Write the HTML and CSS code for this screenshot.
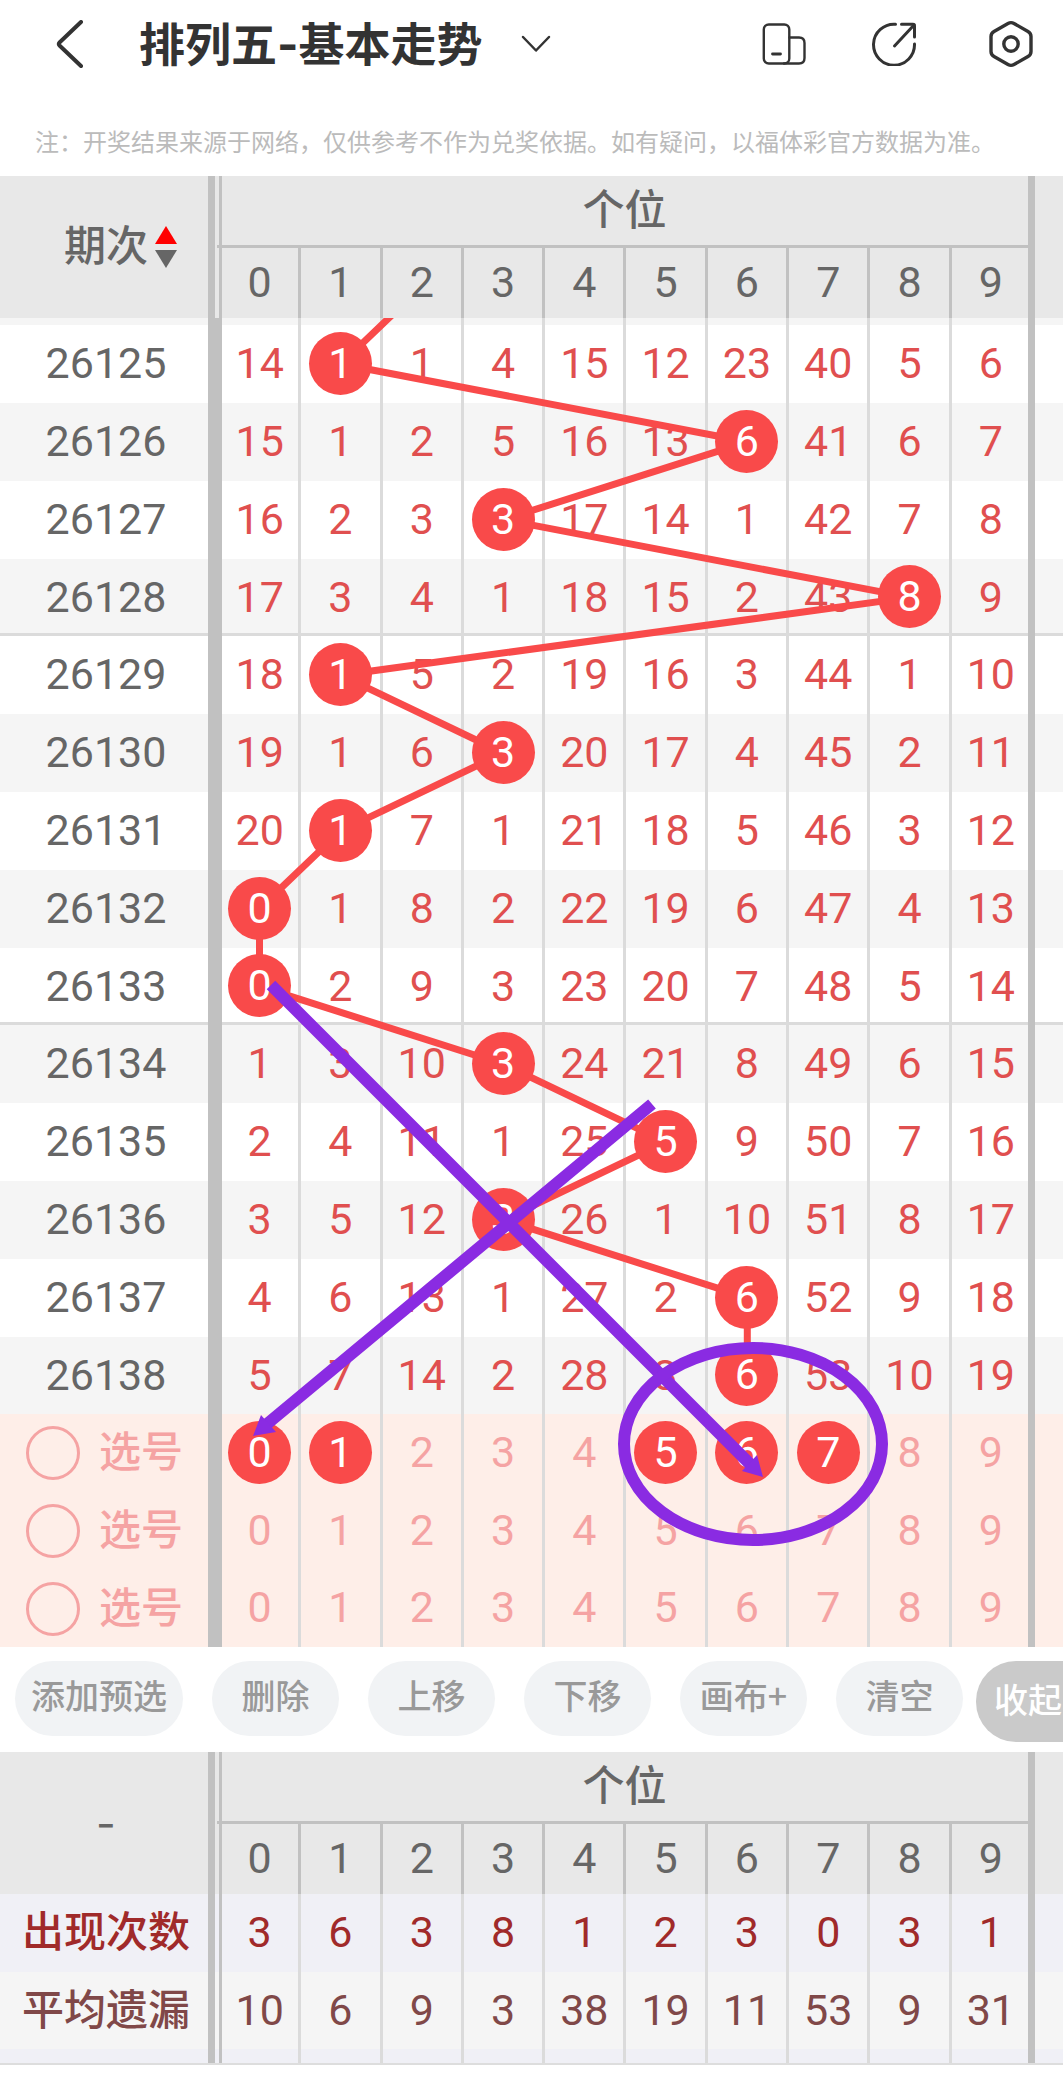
FILE: index.html
```html
<!DOCTYPE html>
<html lang="zh-CN">

<head>
    <meta charset="UTF-8">
    <meta name="viewport" content="width=device-width, initial-scale=1.0">
    <title>排列五-基本走势</title>
    <link rel="stylesheet" href="styles.css">
</head>

<body>

    <header class="header">
        <button type="button" class="icon-btn" aria-label="返回">
            <svg width="28" height="48" viewBox="0 0 28 48"><path d="M25 2 L3.500 22.500 Q2 24 3.500 25.500 L25 46" stroke-width="4"/></svg>
        </button>
        <h1>排列五-基本走势</h1>
        <button type="button" class="icon-btn" aria-label="切换走势">
            <svg width="30" height="18" viewBox="0 0 30 18"><path d="M2 2 L15 15.500 L28 2" stroke-width="2.500"/></svg>
        </button>
        <div class="header-actions">
            <button type="button" class="icon-btn" aria-label="屏幕">
                <svg width="44" height="44" viewBox="0 0 44 44" stroke-width="2.400">
                    <rect x="1.800" y="2.500" width="25.500" height="39" rx="5"/>
                    <path d="M27.500 15.500 H37 Q42.500 15.500 42.500 21 V36 Q42.500 41.500 37 41.500 H22"/>
                    <path d="M10.500 32 H18.500" stroke-width="2.800"/>
                </svg>
            </button>
            <button type="button" class="icon-btn" aria-label="分享">
                <svg width="50" height="44" viewBox="0 0 50 44" stroke-width="3">
                    <path d="M23.500 2.300 A20.500 20.500 0 1 0 42.500 22"/>
                    <path d="M22.500 24 L42 3"/>
                    <path d="M29.500 2.300 H41 Q42.500 2.300 42.500 4 V15"/>
                </svg>
            </button>
            <button type="button" class="icon-btn" aria-label="设置">
                <svg width="46" height="48" viewBox="0 0 46 48" stroke-width="3.400">
                    <path d="M20 3.500 Q23 1.700 26 3.500 L40 11.500 Q43 13.300 43 16.500 V31.500 Q43 34.700 40 36.500 L26 44.500 Q23 46.300 20 44.500 L6 36.500 Q3 34.700 3 31.500 V16.500 Q3 13.300 6 11.500 Z"/>
                    <circle cx="23" cy="24" r="7.200"/>
                </svg>
            </button>
        </div>
    </header>

    <p class="note">注：开奖结果来源于网络，仅供参考不作为兑奖依据。如有疑问，以福体彩官方数据为准。</p>

    <main>
        <div class="chart">
            <table class="trend">
                <colgroup>
                    <col class="col-label">
                    <col span="10">
                    <col class="col-end">
                </colgroup>
                <thead>
                    <tr class="head-top">
                        <th class="label" rowspan="2">
                            <button type="button" class="sort">期次
                                <svg width="22" height="42" viewBox="0 0 22 42"><path class="up" d="M11 0 L22 18 H0 Z"/><path class="down" d="M0 24 H22 L11 42 Z"/></svg>
                            </button>
                        </th>
                        <th class="first last" colspan="10">个位</th>
                        <th class="end" rowspan="2"></th>
                    </tr>
                    <tr class="head-nums"></tr>
                </thead>
                <tbody id="history"></tbody>
                <tbody id="picks" class="picks"></tbody>
            </table>
            <svg class="overlay lines" viewBox="0 176 1063 1471" preserveAspectRatio="none">
                <clipPath id="bodyClip"><rect x="222" y="318" width="806" height="1096"/></clipPath>
                <polyline id="trendLine" clip-path="url(#bodyClip)"/>
            </svg>
            <svg class="overlay marks" viewBox="0 176 1063 1471" preserveAspectRatio="none">
                <path d="M271 985 L750 1464 M652 1104 L267 1424"/>
                <path class="tip" d="M763 1477 L742 1471 L757 1455 Z M253 1436 L261 1415 L276 1432 Z"/>
                <ellipse cx="753" cy="1444" rx="129" ry="96"/>
            </svg>
        </div>

        <div class="toolbar">
            <button type="button">添加预选</button>
            <button type="button">删除</button>
            <button type="button">上移</button>
            <button type="button">下移</button>
            <button type="button">画布+</button>
            <button type="button">清空</button>
            <button type="button" class="collapse">收起</button>
        </div>

        <table class="trend stats">
            <colgroup>
                <col class="col-label">
                <col span="10">
                <col class="col-end">
            </colgroup>
            <thead>
                <tr class="head-top">
                    <th class="label dash" rowspan="2">-</th>
                    <th class="first last" colspan="10">个位</th>
                    <th class="end" rowspan="2"></th>
                </tr>
                <tr class="head-nums"></tr>
            </thead>
            <tbody id="stats"></tbody>
        </table>
    </main>

    <script src="script.js"></script>
</body>

</html>
```

FILE: styles.css
```css
* {
    margin: 0;
    padding: 0;
    box-sizing: border-box;
}

body {
    background-color: #fff;
    color: #666;
    font-family: Roboto, "Noto Sans CJK SC", sans-serif;
}

button {
    border: none;
    background: none;
    font: inherit;
    color: inherit;
    cursor: pointer;
}

.header {
    display: flex;
    align-items: center;
    height: 88px;
    padding: 0 29px 0 56px;
}

.header h1 {
    margin: 0 38px 0 55px;
    font-family: Inter, "Noto Sans CJK SC", sans-serif;
    font-size: 46px;
    line-height: 60px;
    font-weight: bold;
    color: #333;
    white-space: nowrap;
}

.header-actions {
    display: flex;
    align-items: center;
    gap: 66px;
    margin-left: auto;
}

.icon-btn {
    display: flex;
}

.icon-btn svg {
    fill: none;
    stroke: #333;
    stroke-linecap: round;
    stroke-linejoin: round;
}

.note {
    padding: 35px 35px 17px;
    font-family: "Noto Sans CJK SC", sans-serif;
    font-size: 24px;
    line-height: 36px;
    color: #bbb;
    white-space: nowrap;
}

/* trend table */
.chart {
    position: relative;
}

.trend {
    width: 100%;
    table-layout: fixed;
    border-collapse: separate;
    border-spacing: 0;
    font-size: 43px;
    line-height: 50px;
    text-align: center;
}

.col-label {
    width: 217px;
}

.col-end {
    width: 33px;
}

.trend th {
    font-weight: normal;
}

.trend thead {
    background-color: #e8e8e8;
}

.head-top {
    height: 72px;
    font-size: 42px;
}

.trend .head-top .first {
    border-bottom: 3px solid #c1c1c1;
    font-weight: 500;
}

.head-nums {
    height: 70px;
}

.trend .label {
    padding-right: 5px;
    font-size: 43px;
    background: linear-gradient(#c1c1c1, #c1c1c1) right 2px top / 7px 100% no-repeat;
}

.trend .dash {
    font-family: Inter, sans-serif;
}

.trend .num {
    padding-bottom: 2px;
    border-left: 3px solid #dbdbdb;
}

.trend thead .num {
    border-left-color: #c1c1c1;
}

.trend .first,
.trend thead .first {
    border-left: none;
    padding-left: 4px;
    background: linear-gradient(to right, transparent 2px, #c1c1c1 2px, #c1c1c1 5px, transparent 5px);
}

.trend .last {
    border-right: 2px solid #c1c1c1;
}

.trend .num.last {
    padding-left: 2px;
}

.trend .end {
    border-left: 5px solid #c1c1c1;
}

#history .label,
#picks .label {
    background-position: right top;
    background-size: 9px 100%;
}

#history .first,
#picks .first {
    background: linear-gradient(#c1c1c1, #c1c1c1) left top / 5px 100% no-repeat;
}

.sort {
    display: flex;
    align-items: center;
    gap: 7px;
    padding-left: 64px;
    font-size: 42px;
    font-weight: 500;
}

.sort .up {
    fill: #f00;
}

.sort .down {
    fill: #666;
}

.row {
    height: 78px;
}

.row.group-end {
    height: 77px;
}

.sliver {
    height: 7px;
    background-color: #f5f5f5;
}

#history {
    color: #e04f4f;
}

#history .label {
    padding-bottom: 2px;
    color: #666;
}

#history .row:nth-child(odd) {
    background-color: #f5f5f5;
}

#history .group-end:not(:last-child) {
    background-image: linear-gradient(#dbdbdb, #dbdbdb);
    background-position: left bottom;
    background-size: 100% 3px;
    background-repeat: no-repeat;
}

.ball,
.pick {
    display: block;
    width: 63px;
    height: 63px;
    margin: 0 auto;
    line-height: 63px;
}

.ball,
.pick[aria-pressed="true"] {
    position: relative;
    z-index: 2;
    border-radius: 50%;
    background-color: #f94a4a;
    color: #fff;
}

.picks {
    background-color: #feeee8;
    color: #f5a3a3;
}

.picks label {
    display: flex;
    align-items: center;
    gap: 19px;
    padding-left: 26px;
    font-size: 42px;
    font-weight: 500;
}

.picks input {
    appearance: none;
    width: 54px;
    height: 54px;
    border: 3px solid #f5a3a3;
    border-radius: 50%;
}

.picks input:checked {
    background-color: #f94a4a;
}

/* lines drawn over the table */
.overlay {
    position: absolute;
    top: 0;
    left: 0;
    width: 100%;
    height: 100%;
    fill: none;
    pointer-events: none;
}

.lines {
    z-index: 1;
    stroke: #f94a4a;
    stroke-width: 7;
}

.marks {
    z-index: 3;
    stroke: #8a2be2;
    stroke-width: 12;
}

.marks .tip {
    fill: #8a2be2;
    stroke: none;
}

.toolbar {
    position: relative;
    display: flex;
    align-items: flex-start;
    gap: 29px;
    height: 105px;
    padding: 14px 15px;
    overflow: hidden;
}

.toolbar button {
    flex: none;
    min-width: 127px;
    height: 75px;
    padding: 0 16px 8px;
    border-radius: 38px;
    background-color: #f1f3f5;
    color: #999;
    font-family: "Noto Sans CJK SC", sans-serif;
    font-size: 34px;
    font-weight: 500;
    line-height: 50px;
}

.toolbar .collapse {
    position: absolute;
    top: 14px;
    right: 0;
    min-width: 0;
    height: 81px;
    padding: 0 1px 5px 18px;
    border-radius: 40px 0 0 40px;
    background-color: #cacaca;
    color: #fff;
}

/* statistics */
.stats {
    border-bottom: 2px solid #ddd;
}

.stats .count {
    background-color: #f0f0f6;
    color: #a02a2a;
}

.stats .average {
    background-color: #f5f5f5;
    color: #804848;
}

.stats tbody .label {
    font-size: 42px;
    font-weight: 500;
}

.stats .cut {
    height: 14px;
    background-color: #f0f0f6;
}
```

FILE: script.js
```javascript
// [issue, winning digit, cells 0-9]
const history = [
    ["26125", 1, [14, 1, 1, 4, 15, 12, 23, 40, 5, 6]],
    ["26126", 6, [15, 1, 2, 5, 16, 13, 6, 41, 6, 7]],
    ["26127", 3, [16, 2, 3, 3, 17, 14, 1, 42, 7, 8]],
    ["26128", 8, [17, 3, 4, 1, 18, 15, 2, 43, 8, 9]],
    ["26129", 1, [18, 1, 5, 2, 19, 16, 3, 44, 1, 10]],
    ["26130", 3, [19, 1, 6, 3, 20, 17, 4, 45, 2, 11]],
    ["26131", 1, [20, 1, 7, 1, 21, 18, 5, 46, 3, 12]],
    ["26132", 0, [0, 1, 8, 2, 22, 19, 6, 47, 4, 13]],
    ["26133", 0, [0, 2, 9, 3, 23, 20, 7, 48, 5, 14]],
    ["26134", 3, [1, 3, 10, 3, 24, 21, 8, 49, 6, 15]],
    ["26135", 5, [2, 4, 11, 1, 25, 5, 9, 50, 7, 16]],
    ["26136", 3, [3, 5, 12, 3, 26, 1, 10, 51, 8, 17]],
    ["26137", 6, [4, 6, 13, 1, 27, 2, 6, 52, 9, 18]],
    ["26138", 6, [5, 7, 14, 2, 28, 3, 6, 53, 10, 19]]
];
const picks = [[0, 1, 5, 6, 7], [], []];
const digits = [0, 1, 2, 3, 4, 5, 6, 7, 8, 9];

function edge(i) {
    return i === 0 ? " first" : i === 9 ? " last" : "";
}

function cells(values, render) {
    return values.map((v, i) => `<td class="num${edge(i)}">${render ? render(v, i) : v}</td>`).join("") +
        '<td class="end"></td>';
}

document.querySelectorAll(".head-nums").forEach(tr => {
    tr.innerHTML = digits.map(d => `<th class="num${edge(d)}">${d}</th>`).join("");
});

const blank = digits.map(() => "");

document.getElementById("history").innerHTML =
    `<tr class="sliver"><td class="label"></td>${cells(blank)}</tr>` +
    history.map(([issue, win, values]) => {
        const end = ["26128", "26133", "26138"].includes(issue) ? " group-end" : "";
        return `<tr class="row${end}"><th class="label" scope="row">${issue}</th>` +
            cells(values, (v, i) => i === win ? `<span class="ball">${v}</span>` : v) + "</tr>";
    }).join("");

document.getElementById("picks").innerHTML = picks.map((chosen, n) =>
    `<tr class="row${n === 2 ? " group-end" : ""}"><th class="label" scope="row">` +
    `<label><input type="radio" name="pick">选号</label></th>` +
    cells(digits, d => `<button type="button" class="pick" aria-pressed="${chosen.includes(d)}">${d}</button>`) +
    "</tr>").join("");

document.getElementById("stats").innerHTML =
    `<tr class="row count"><th class="label" scope="row">出现次数</th>${cells([3, 6, 3, 8, 1, 2, 3, 0, 3, 1])}</tr>` +
    `<tr class="row group-end average"><th class="label" scope="row">平均遗漏</th>${cells([10, 6, 9, 3, 38, 19, 11, 53, 9, 31])}</tr>` +
    `<tr class="cut"><td class="label"></td>${cells(blank)}</tr>`;

// the line enters from the issue above the first visible row
const wins = [2, ...history.map(row => row[1])];
document.getElementById("trendLine").setAttribute("points",
    wins.map((d, k) => `${259.5 + d * 81.3},${286.2 + k * 77.8}`).join(" "));

document.querySelectorAll(".pick").forEach(btn => {
    btn.onclick = () => btn.setAttribute("aria-pressed", btn.getAttribute("aria-pressed") !== "true");
});
```
